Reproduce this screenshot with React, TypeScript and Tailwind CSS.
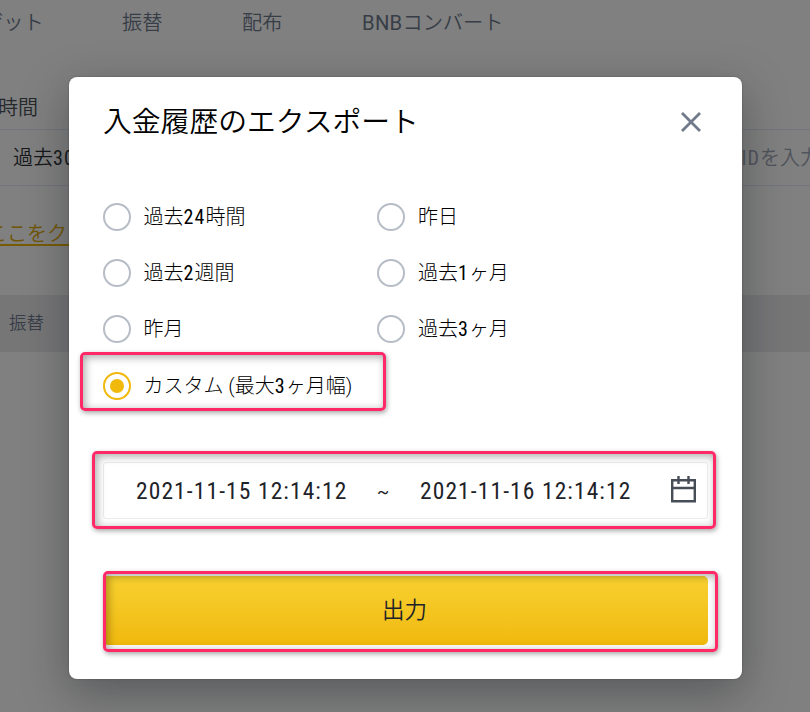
import React from "react";

const jp = "font-['Roboto','Noto_Sans_CJK_JP',sans-serif]";

function Mixed({ text }: { text: string }) {
  return (
    <>
      {text.split(/([0-9A-Z]+)/).map((part, i) =>
        i % 2 ? (
          <span key={i} className="font-[370] tracking-[1.1px] [font-stretch:84%]">
            {part}
          </span>
        ) : (
          part
        ),
      )}
    </>
  );
}

function Radio({ label, checked = false }: { label: string; checked?: boolean }) {
  return (
    <label className="flex h-[28px] items-center gap-[12.5px]">
      <span
        className={
          checked
            ? "flex size-[28px] shrink-0 items-center justify-center rounded-full border-2 border-[#f0b90b]"
            : "flex size-[28px] shrink-0 items-center justify-center rounded-full border-2 border-[#b7bdc6]"
        }
      >
        {checked && <span className="size-[14px] rounded-full bg-[#f0b90b]" />}
      </span>
      <span className="text-[20px] leading-7 font-light whitespace-nowrap text-black">
        <Mixed text={label} />
      </span>
    </label>
  );
}

function Highlight({ place }: { place: string }) {
  return (
    <div
      className={
        "pointer-events-none absolute rounded-[5px] border-[3px] border-[#ff2968] shadow-[1px_2px_5px_rgba(0,0,0,0.35),inset_2px_2px_8px_rgba(0,0,0,0.35)] " +
        place
      }
    />
  );
}

function Background() {
  return (
    <div className="h-[712px] whitespace-nowrap font-[350] text-[#3a3f47]">
      <nav className="flex h-[94px] items-start pt-[9px] text-[20.2px] leading-7 text-[#373d47]">
        <span className="-ml-[17px] w-[139px]">ゲット</span>
        <span className="w-[120px]">振替</span>
        <span className="w-[120px]">配布</span>
        <span>
          <span className="font-normal tracking-[0.3px]">BNB</span>コンバート
        </span>
      </nav>
      <div className="h-[35px] text-[20px] leading-7 text-[#25282c]">
        <span className="-ml-[2px]">時間</span>
      </div>
      <div className="flex h-[57px] items-center justify-between border-y border-[#73757a] pl-[13px] text-[20px]">
        <span className="text-[#16181b]">
          <Mixed text="過去30日間" />
        </span>
        <span className="-mr-[10px] text-[#50545c]">
          <Mixed text="IDを入力" />
        </span>
      </div>
      <div className="flex h-[109px] items-start pt-[35px]">
        <span className="-ml-[13px] h-[25px] border-b-2 border-[#785c05] text-[20px] leading-[27px] text-[#705604]">ここをクリック</span>
      </div>
      <div className="flex h-[57px] items-center bg-[#767677] pl-[9px] text-[17.5px] text-[#373d47]">振替</div>
    </div>
  );
}

export default function App() {
  return (
    <div className={"relative h-[712px] w-[810px] overflow-hidden bg-[#808080] " + jp}>
      <Background />
      <section className="absolute top-[77px] left-[69px] flex h-[602px] w-[673px] flex-col rounded-[8px] bg-white px-[34px] shadow-[0_14px_46px_rgba(24,26,32,0.38),0_0_2px_rgba(0,0,0,0.3)]">
        <header className="flex h-[92px] items-center justify-between pr-[7px]">
          <h1 className="text-[28.8px] font-[330] text-black">入金履歴のエクスポート</h1>
          <svg className="size-[20px] -translate-y-px" viewBox="0 0 20 20" fill="none" stroke="#707a8a" strokeWidth="2.8">
            <path d="M1 1 19 19M19 1 1 19" />
          </svg>
        </header>
        <div className="mt-[33.5px] grid grid-cols-[274.4px_1fr] gap-y-[28.4px]">
          <Radio label="過去24時間" />
          <Radio label="昨日" />
          <Radio label="過去2週間" />
          <Radio label="過去1ヶ月" />
          <Radio label="昨月" />
          <Radio label="過去3ヶ月" />
          <Radio label="カスタム (最大3ヶ月幅)" checked />
        </div>
        <div className="mt-[62.3px] flex h-[57px] shrink-0 items-center rounded-[3px] border border-[#eaecef] pt-[3px] pr-[11px] pl-[32px] text-[23.5px] font-[380] text-[#1e2329]">
          <span className="w-[241px] tracking-[1.1px] whitespace-pre [font-stretch:84%]">2021-11-15 12:14:12</span>
          <span className="w-[43px] text-[18px]">~</span>
          <span className="flex-1 tracking-[1.1px] whitespace-pre [font-stretch:84%]">2021-11-16 12:14:12</span>
          <svg className="h-[27px] w-[25px] -translate-y-[2px]" viewBox="0 0 25 27" fill="none" stroke="#474d57" strokeWidth="2.4">
            <path d="M1.2 4.2H23.8V25.3H1.2ZM1.2 12H23.8M7.5 0V8M17.5 0V8" />
          </svg>
        </div>
        <button className="mt-[56.6px] h-[69px] w-[605px] shrink-0 rounded-[5px] bg-linear-to-b from-[#f8d12f] to-[#f0b90b] pt-px pr-[2px] text-[22.5px] font-[350] text-[#1e2329]">
          出力
        </button>
        <Highlight place="top-[275px] left-[11px] h-[59px] w-[306px]" />
        <Highlight place="top-[374px] left-[23px] h-[78px] w-[624px]" />
        <Highlight place="top-[494px] left-[34px] h-[81px] w-[615px]" />
      </section>
    </div>
  );
}
